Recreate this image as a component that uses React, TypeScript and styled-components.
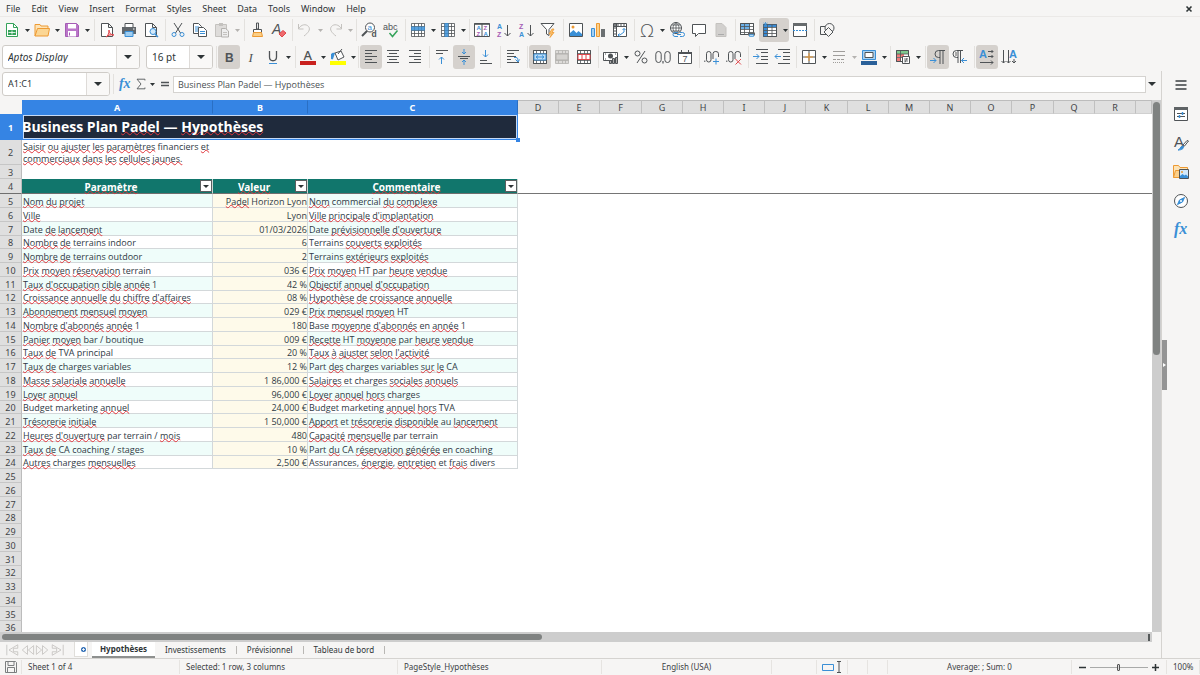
import React from "react";
import styled, { createGlobalStyle, css } from "styled-components";

const INK = "#4f5356";
const BLUE = "#3a8fd6";
const ACCENT = "#3584e4";
const LINE = "#d5d3d0";
const CHROME = "#f6f5f4";
const UI_FONT = '"Noto Sans", "Open Sans", sans-serif';
const SHEET_FONT = '"Open Sans", "Noto Sans", sans-serif';

const GlobalStyle = createGlobalStyle`
  *, *::before, *::after { box-sizing: border-box; }
  html, body { margin: 0; padding: 0; }
  body { background: ${CHROME}; color: #2e3436; font: 9px/12px ${UI_FONT}; }
  button, input { font: inherit; color: inherit; margin: 0; padding: 0; border: 0; background: none; }
`;

/* ---------- Frame ---------- */

const Frame = styled.div`
  height: 100vh;
  display: flex;
  flex-direction: column;
  overflow: hidden;
`;

const MenuBar = styled.nav`
  flex: none;
  height: 17px;
  padding: 1px 6px 0;
  display: flex;
  align-items: center;
  gap: 11px;
  border-bottom: 1px solid #ebe9e7;
`;

const MenuItem = styled.button`
  white-space: nowrap;
`;

const CloseButton = styled.button`
  margin-left: auto;
  width: 10px;
  height: 10px;
  display: grid;
  place-items: center;
`;

const ToolBar = styled.div`
  flex: none;
  height: 27px;
  padding-bottom: 1px;
  display: flex;
  align-items: center;
`;

const ToolGroup = styled.div<{ $width: number; $first?: boolean }>`
  flex: none;
  width: ${(p) => p.$width}px;
  height: 22px;
  padding-left: ${(p) => (p.$first ? 0 : 1)}px;
  display: flex;
  align-items: center;
  border-left: 1px solid ${(p) => (p.$first ? "transparent" : "#e3e1de")};
`;

const Tool = styled.button<{ $on?: boolean }>`
  flex: none;
  width: 22px;
  height: 24px;
  display: grid;
  place-items: center;
  border-radius: 3px;
  ${(p) => p.$on && css`background: #d5d1cd;`}
`;

const SplitTool = styled.span<{ $on?: boolean }>`
  flex: none;
  height: 24px;
  display: flex;
  align-items: center;
  border-radius: 3px;
  ${(p) => p.$on && css`background: #d5d1cd;`}
`;

const ArrowButton = styled.button`
  width: 8px;
  height: 22px;
  display: grid;
  place-items: center;
`;

const Svg = styled.svg`
  display: block;
  overflow: visible;
  fill: none;
  stroke: ${INK};
  stroke-width: 1;
  text {
    stroke: none;
    fill: ${INK};
    font-family: "Liberation Sans", sans-serif;
  }
`;

const Combo = styled.div<{ $width: number }>`
  flex: none;
  width: ${(p) => p.$width}px;
  height: 24px;
  display: flex;
  border: 1px solid #cfccc8;
  border-radius: 3px;
  background: #fff;
  overflow: hidden;
`;

const ComboInput = styled.input<{ $italic?: boolean; $large?: boolean }>`
  flex: 1;
  min-width: 0;
  padding-left: 5px;
  outline: none;
  color: #2e3436;
  font-size: ${(p) => (p.$large ? 10 : 9)}px;
  font-style: ${(p) => (p.$italic ? "italic" : "normal")};
`;

const ComboButton = styled.button`
  width: 23px;
  display: grid;
  place-items: center;
  border-left: 1px solid #dedbd8;
  background: #f9f8f7;
`;

const FontRow = styled.div`
  flex: none;
  display: flex;
  gap: 6px;
  padding: 0 3px 0 2px;
`;

/* ---------- Work area ---------- */

const Work = styled.div`
  flex: 1;
  min-height: 0;
  display: flex;
`;

const Main = styled.main`
  flex: 1;
  min-width: 0;
  display: flex;
  flex-direction: column;
`;

const FormulaBar = styled.div`
  flex: none;
  height: 29px;
  padding: 1px 4px 4px 2px;
  display: flex;
  align-items: center;
`;

const FormulaTools = styled.div`
  height: 20px;
  margin-left: 3px;
  padding-left: 2px;
  display: flex;
  align-items: center;
  border-left: 1px solid #e3e1de;
`;

const SmallTool = styled.button<{ $width: number }>`
  width: ${(p) => p.$width}px;
  height: 20px;
  display: grid;
  place-items: center;
`;

const FormulaInput = styled.input`
  flex: 1;
  min-width: 0;
  height: 17px;
  padding: 0 4px;
  border: 1px solid ${LINE};
  background: #fff;
  outline: none;
  color: #4a4f52;
  font-family: ${SHEET_FONT};
`;

const SheetRow = styled.div`
  flex: 1;
  min-height: 0;
  display: flex;
`;

const SheetView = styled.div`
  flex: 1;
  min-width: 0;
  overflow: hidden;
  background: #fff;
`;

const Sheet = styled.table`
  width: 100%;
  table-layout: fixed;
  border-collapse: separate;
  border-spacing: 0;
  line-height: 11px;
  th, td { padding: 0; }
`;

const Corner = styled.td`
  background: ${CHROME};
`;

const ColHead = styled.th<{ $on?: boolean }>`
  border-top: 1px solid ${(p) => (p.$on ? ACCENT : "#bcbcbc")};
  border-right: 1px solid ${(p) => (p.$on ? "#2a6fc4" : "#c0c0c0")};
  border-bottom: 1px solid ${(p) => (p.$on ? ACCENT : "#d0d0d0")};
  background: ${(p) => (p.$on ? ACCENT : "#dfdfdf")};
  color: ${(p) => (p.$on ? "#fff" : "#3f4447")};
  font-weight: ${(p) => (p.$on ? 700 : 400)};
`;

const RowHead = styled.th<{ $on?: boolean; $frozen?: boolean }>`
  && { padding-top: 1px; }
  border-right: 1px solid ${(p) => (p.$on ? ACCENT : "#bcbcbc")};
  border-bottom: 1px solid ${(p) => (p.$frozen ? "#6f6f6f" : p.$on ? ACCENT : "#c6c6c6")};
  background: ${(p) => (p.$on ? ACCENT : "#dfdfdf")};
  color: ${(p) => (p.$on ? "#fff" : "#3f4447")};
  font-weight: ${(p) => (p.$on ? 700 : 400)};
`;

const Line = styled.tr<{ $height: number }>`
  height: ${(p) => p.$height}px;
`;

const TitleCell = styled.td`
  position: relative;
  background: #1f2a3c;
  color: #fff;
  font: 700 14px/20px ${SHEET_FONT};
  box-shadow: inset 0 0 0 1px ${ACCENT}, inset 0 0 0 2px #c5daf6;
`;

const FillHandle = styled.span`
  position: absolute;
  right: -2px;
  bottom: -2px;
  width: 4px;
  height: 4px;
  background: ${ACCENT};
`;

const NoteCell = styled.td`
  && { padding: 1px 0 0 1px; }
  color: #2f3a45;
  font-family: ${SHEET_FONT};
  line-height: 12px;
  vertical-align: top;
`;

const HeadCell = styled.th`
  border-right: 1px solid #cbd5d1;
  border-bottom: 1px solid #6f6f6f;
  background: #11766c;
  color: #fff;
  font-weight: 700;
  font-size: 10px;
`;

const HeadInner = styled.div`
  display: flex;
  align-items: center;
  height: 14px;
`;

const HeadLabel = styled.span`
  flex: 1;
  padding-top: 2px;
`;

const FilterButton = styled.button`
  flex: none;
  width: 12px;
  height: 12px;
  display: grid;
  place-items: center;
  border: 1px solid #5a5f60;
  background: #fff;
`;

const FrozenCell = styled.td`
  border-bottom: 1px solid #757575;
`;

const Cell = styled.td<{ $tint: string; $right?: boolean }>`
  && { padding: 1px 0 0 ${(p) => (p.$right ? 0 : 1)}px; }
  border-right: 1px solid #d3d8da;
  border-bottom: 1px solid #d3d8da;
  background: ${(p) => p.$tint};
  color: #2f3a45;
  font-family: ${SHEET_FONT};
  white-space: nowrap;
  text-align: ${(p) => (p.$right ? "right" : "left")};
`;

const Misspelt = styled.span`
  text-decoration: underline wavy #e0353b 1px;
  text-decoration-skip-ink: none;
  text-underline-offset: -1px;
`;

/* ---------- Scroll bars, tabs, side bar, status ---------- */

const VScroll = styled.div`
  flex: none;
  width: 9px;
  padding: 2px 1px;
  background: #cdcdcd;
`;

const VThumb = styled.div`
  height: 48%;
  border-radius: 4px;
  background: #7f8281;
`;

const HScroll = styled.div`
  flex: none;
  height: 10px;
  margin-right: 9px;
  padding: 2px;
  display: flex;
  justify-content: space-between;
  align-items: center;
  background: #cdcdcd;
`;

const HThumb = styled.div`
  width: 47%;
  height: 6px;
  border-radius: 4px;
  background: #7f8281;
`;

const SplitGrip = styled.div`
  width: 2px;
  height: 7px;
  background: #55595a;
`;

const TabBar = styled.div`
  flex: none;
  height: 16px;
  padding-left: 5px;
  display: flex;
  font-size: 8px;
`;

const TabNav = styled.button`
  width: 15px;
  display: grid;
  place-items: center;
`;

const AddSheet = styled.button`
  width: 14px;
  height: 15px;
  margin: 0 4px 0 9px;
  display: grid;
  place-items: center end;
  border: 1px solid #e0deda;
  border-top: 0;
  background: #fff;
`;

const Tab = styled.button<{ $on?: boolean }>`
  height: 16px;
  padding: 0 8px;
  white-space: nowrap;
  ${(p) =>
    p.$on
      ? css`
          margin-right: 2px;
          background: #fff;
          border-bottom: 2px solid #8e908f;
          font-weight: 700;
        `
      : css`
          display: flex;
          align-items: center;
          padding-right: 0;
          &::after {
            content: "";
            width: 1px;
            height: 8px;
            margin: 0 2px 0 10px;
            background: #b9b7b4;
          }
        `}
`;

const SideBar = styled.aside`
  flex: none;
  width: 39px;
  display: flex;
  border-left: 1px solid ${LINE};
`;

const DeckHandle = styled.button`
  align-self: center;
  width: 5px;
  height: 50px;
  display: grid;
  place-items: center;
  background: #949494;
`;

const Deck = styled.div`
  flex: 1;
  padding: 4px 5px 0 0;
  display: flex;
  flex-direction: column;
  align-items: center;
  gap: 9px;
`;

const DeckButton = styled.button`
  width: 20px;
  height: 20px;
  display: grid;
  place-items: center;
`;

const StatusBar = styled.footer`
  flex: none;
  height: 17px;
  display: flex;
  border-top: 1px solid ${LINE};
  font-size: 8px;
`;

const StatusCell = styled.div<{ $width: number; $grow?: boolean; $center?: boolean }>`
  flex: ${(p) => (p.$grow ? 1 : 0)} 0 ${(p) => p.$width}px;
  min-width: 0;
  margin: 1px 0;
  padding: 0 6px;
  display: flex;
  align-items: center;
  gap: 3px;
  justify-content: ${(p) => (p.$center ? "center" : "flex-start")};
  border-right: 1px solid #e6e4e1;
  white-space: nowrap;
  color: #3c4144;
`;

const ZoomButton = styled.button`
  width: 9px;
  height: 14px;
  flex: none;
  display: grid;
  place-items: center;
`;

const ZoomSlider = styled.input`
  appearance: none;
  flex: 1;
  min-width: 0;
  height: 12px;
  background: linear-gradient(#a9aaa9, #a9aaa9) center / 100% 1px no-repeat;
  &::-webkit-slider-thumb {
    appearance: none;
    width: 3px;
    height: 7px;
    border: 1px solid #555;
    border-radius: 1px;
    background: #ddd;
  }
`;

/* ---------- Icons ---------- */

const C = { ink: INK, blue: BLUE, purple: "#a45cb4", green: "#35a35a", orange: "#ed9a33", red: "#e0474c", pale: "#c4c2bf" };

const lines = (ys: number[][], stroke = C.ink) => ys.map(([y, a, b], i) => <path key={i} d={`M${a} ${y}.5H${b}`} stroke={stroke} />);
const grid = (stroke = C.ink) => <path d="M1.5 1.5h13v13h-13zM1.5 4.5h13M1.5 8.5h13M1.5 11.5h13M4.5 1.5v13M8.5 1.5v13M11.5 1.5v13" stroke={stroke} strokeWidth=".8" />;
const page = <path d="M2.5 1.5h7l4 4v9h-11zM9.5 1.5v4h4" fill="#fff" />;
const tint = (fill: string) => ({ fill });

const icons: Record<string, React.ReactNode> = {
  new: (<><path d="M2.5 1.5h7l4 4v9h-11z" fill="#fff" stroke={C.green} /><path d="M9.5 1.5v4h4" stroke={C.green} /><path d="M4 8h8v5H4z" fill={C.green} stroke="none" /><path d="M4.5 10.500h7M8 8.500v4" stroke="#fff" strokeWidth=".8" /></>),
  open: (<><path d="M1 14V2.500h5l1 1.500h7v3" fill="#fde3b5" stroke={C.orange} /><path d="M1 14l2.500-7.500h12L14 14z" fill="#fbd694" stroke={C.orange} /></>),
  save: (<><path d="M1.500 1.500h11l2 2v11h-13z" fill="#bb76c9" stroke={C.purple} /><path d="M4 2h8v4.500H4z" fill="#fff" stroke="none" /><path d="M4 9h8v5.500H4z" fill="#fff" stroke="none" /><path d="M5.500 10.500v3" stroke={C.purple} /></>),
  pdf: (<>{page}<path d="M7 15c2-1 3-4 3-7 0 3 2 5 5 5-3-.5-6 0-8 2z" stroke={C.red} fill="#f6bcbc" /></>),
  print: (<><path d="M4 5V1.500h8V5" fill="#fff" /><path d="M1 5h14v7H1z" fill="#61666a" stroke="none" /><path d="M4 9.500h8v5H4z" fill="#9fcdf0" stroke={C.blue} /><path d="M12 7h1.500" stroke="#fff" /></>),
  preview: (<>{page}<circle cx="10" cy="9.500" r="3" fill="#d3e9fa" stroke={C.blue} /><path d="M12 12l3 3" stroke={C.blue} strokeWidth="1.500" /></>),
  cut: (<><path d="M4 1l6.500 10M12 1L5.500 11" /><circle cx="4" cy="12.500" r="2" stroke={C.blue} /><circle cx="12" cy="12.500" r="2" stroke={C.blue} /></>),
  copy: (<><path d="M1.500 1.500h5l3 3v7h-8z" fill="#fff" /><path d="M3 5h4M3 7h4M3 9h3" stroke={C.blue} /><path d="M6.500 5.500h5l3 3v6h-8z" fill="#fff" /><path d="M8 9.500h5M8 11.500h5" stroke={C.blue} /></>),
  paste: (<><path d="M1.500 2.500h11v12h-11z" fill="#dedcda" stroke={C.pale} /><path d="M5 1h4v3H5z" fill={C.pale} stroke="none" /><path d="M7.500 6.500h4l3 2.500v6h-7z" fill="#eee" stroke="#b3b1ae" /><path d="M9 10.500h4M9 12.500h4" stroke={C.pale} /></>),
  brush: (<><path d="M7.500 1h2v6h-2z" fill="#e8e8e8" /><path d="M4.500 7.500h8v3h-8z" fill="#fff" /><path d="M4.500 10.500l-1 4h10l-1-4z" fill="#fbcf87" stroke={C.orange} /></>),
  clear: (<><text x="1" y="11.500" fontSize="14" fontStyle="italic">A</text><path d="M8 12l4-3.500 3 2.500-4 4z" fill="#ef6a6d" stroke={C.red} /></>),
  undo: (<path d="M1.500 2v5h5M1.800 6.500C4 2.500 9 1.500 11.500 4.500S11 11 7 14" stroke={C.pale} />),
  redo: (<path d="M14.500 2v5h-5M14.200 6.500C12 2.500 7 1.500 4.500 4.500S5 11 9 14" stroke={C.pale} />),
  find: (<><circle cx="9" cy="5.500" r="4.500" fill="#fff" /><path d="M6 9L1 14" strokeWidth="2" /><text x="6.500" y="8" fontSize="8" style={tint(C.blue)}>a</text><text x="10.500" y="15" fontSize="8.500" fontWeight="700">d</text></>),
  spell: (<><text x="0" y="7.500" fontSize="9">abc</text><path d="M6.500 11l3 3.500 5-6" stroke={C.green} strokeWidth="1.500" /></>),
  row: (<><path d="M1.500 1.500h13v13h-13z" fill="#fff" stroke="none" />{grid()}<path d="M1 4.500h14v4H1z" fill={C.blue} stroke="none" opacity=".85" /></>),
  col: (<><path d="M1.500 1.500h13v13h-13z" fill="#fff" stroke="none" />{grid()}<path d="M4.500 1h4v14h-4z" fill={C.blue} stroke="none" opacity=".85" /></>),
  sort: (<><path d="M.5 1.500h15v13H.5zM8 2v12" fill="#fff" /><path d="M.5 1h15v1.800H.5z" fill={C.ink} stroke="none" /><g fontSize="6" fontWeight="700"><text x="2.500" y="8" style={tint(C.blue)}>A</text><text x="9.500" y="8" style={tint(C.purple)}>Z</text><text x="2.500" y="14" style={tint(C.purple)}>Z</text><text x="9.500" y="14" style={tint(C.blue)}>A</text></g></>),
  asc: (<><g fontSize="7" fontWeight="700"><text x="1" y="6.500" style={tint(C.blue)}>A</text><text x="1" y="14.500" style={tint(C.purple)}>Z</text></g><path d="M11.500 3v11M8.500 11l3 3 3-3" /></>),
  desc: (<><g fontSize="7" fontWeight="700"><text x="1" y="6.500" style={tint(C.purple)}>Z</text><text x="1" y="14.500" style={tint(C.blue)}>A</text></g><path d="M12.500 3v11M9.500 11l3 3 3-3" /></>),
  filter: (<><path d="M1 1.500h13l-5 6v6l-2.500-1.500V7.500z" fill="#fff" /><path d="M12 7l-3 5h2.500L10 15.500 14 10.500h-2L14 7z" fill="#fac06c" stroke={C.orange} strokeWidth=".8" /></>),
  image: (<><path d="M1.500 1.500h13v13h-13z" fill="#fff" /><path d="M2 14v-3l3.500-3 3 3 2-2 3.500 3v2z" fill={C.blue} stroke="none" /><circle cx="5" cy="5" r="1.500" fill={C.orange} stroke="none" /></>),
  chart: (<><path d="M1.500 6.500h3v8h-3z" fill="#a5d0f2" stroke={C.blue} /><path d="M6.500 1.500h3v13h-3z" fill="#fbd08b" stroke={C.orange} /><path d="M11 7h4v8h-4z" fill="#6b6f71" stroke="none" /></>),
  pivot: (<><path d="M1.500 1.500h13v13h-13zM1.500 4.500h13M4.500 1.500v13" fill="#fff" /><path d="M2 3h12M3 2v12" strokeDasharray="2 1" /><path d="M12 6.500v3.500l-4 3H6M10.500 8L12 6.500 13.500 8M7.500 11.500L6 13l1.500 1.500" stroke={C.blue} /></>),
  omega: <text x="1" y="14.500" fontSize="18" style={{ fontFamily: SHEET_FONT, fontWeight: 300 }}>Ω</text>,
  link: (<><circle cx="7" cy="6" r="5.500" fill="#fff" /><path d="M1.500 6h11M7 .5v11M2.500 3h9M2.500 9h9M7 .5c-4 3-4 8 0 11M7 .5c4 3 4 8 0 11" strokeWidth=".8" /><path d="M9 10.500H6a2 2 0 0 0 0 4h3M11 10.500h2.500a2 2 0 0 1 0 4H11M8 12.500h4" stroke={C.blue} /></>),
  comment: (<path d="M1.500 2.500h13v9h-7l-3 3v-3h-3z" fill="#fff" />),
  header: (<><path d="M3 1.500h6l4 4v9H3z" fill="#d2d0ce" stroke={C.pale} /><path d="M5 12.500h6" stroke="#aaa" /></>),
  printarea: (<><path d="M.5 1.500h13v11H.5z" fill="#fff" /><path d="M1 2h9v5H1z" fill="#6db1e8" stroke="none" /><path d="M.5 1.500h13v11H.5zM.5 4.500h13M.5 7.500h13M.5 10.500h13M4.500 1.500v11M9.500 1.500v11" strokeWidth=".8" /><path d="M8 10.500h7v3H8z" fill="#5f6467" stroke="none" /><path d="M9.500 12.500h4v2h-4z" fill="#b4d9f5" stroke={C.blue} strokeWidth=".7" /></>),
  freeze: (<><path d="M1.500 2.500h13v12h-13z" fill="#fff" /><path d="M1 2h14v3H1zM1 2h4.500v13H1z" fill="#398bd6" stroke="none" /><path d="M1.500 5.500h13M1.500 8.500h13M1.500 11.500h13M5.500 2.500v12M10 2.500v12M1.500 2.500h13v12h-13z" strokeWidth=".8" /><path d="M3.500 0v4M1.500 1l4 3M5.500 1l-4 3" stroke={BLUE} strokeWidth=".8" /></>),
  split: (<><path d="M1.500 1.500h13v13h-13z" fill="#fff" /><path d="M1 1h14v3H1z" fill="#666a6c" stroke="none" /><path d="M1 8.500h14" stroke={C.blue} strokeDasharray="2 1" /></>),
  shapes: (<><path d="M1.500 4.500h8v8h-8z" /><circle cx="10.500" cy="6" r="4.500" fill={CHROME} /><path d="M9.500 5.500l4.500 4.500-4.500 4.500L5 10z" fill={CHROME} /></>),
  bold: <text x="4" y="12.500" fontSize="12" fontWeight="700">B</text>,
  italic: <text x="5.500" y="12.500" fontSize="13" fontStyle="italic" style={{ fontFamily: '"Liberation Serif", serif' }}>I</text>,
  underline: (<><path d="M4.500 2v6c0 5 7 5 7 0V2" strokeWidth="1.300" /><path d="M4 14.500h8" stroke={C.blue} /></>),
  fontcolor: (<><text x="3.500" y="10.500" fontSize="13" style={{ fontFamily: UI_FONT, fontWeight: 500 }}>A</text><path d="M0 12h16v4H0z" fill="#c9211e" stroke="none" /></>),
  fill: (<><path d="M5 4l6-2 3 6-6 3zM5 4c-3 1-4 3-3 6M8 5l4-5" fill="#fff" /><path d="M1 5c2-2 3-1 4-1l-2 6c-1 1-2 0-2-1z" fill={C.blue} stroke="none" /><path d="M0 12h16v4H0z" fill="#ff0" stroke="none" /></>),
  left: lines([[1, 2, 14], [4, 2, 9], [7, 2, 14], [10, 2, 9], [13, 2, 14]]),
  center: lines([[1, 2, 14], [4, 4, 12], [7, 2, 14], [10, 4, 12], [13, 2, 14]]),
  right: lines([[1, 2, 14], [4, 7, 14], [7, 2, 14], [10, 7, 14], [13, 2, 14]]),
  top: (<>{lines([[1, 2, 14], [4, 2, 9]])}<path d="M7.500 15V8M5 10.500L7.500 8l2.500 2.500" stroke={C.blue} /></>),
  middle: (<>{lines([[7, 2, 14], [9, 4, 12]])}<path d="M8 0v5M6 3l2 2 2-2M8 16v-5M6 13l2-2 2 2" stroke={C.blue} /></>),
  bottom: (<>{lines([[11, 2, 9], [14, 2, 14]])}<path d="M7.500 1v7M5 5.500L7.500 8 10 5.500" stroke={C.blue} /></>),
  wrap: (<>{lines([[1, 2, 14], [4, 2, 9], [7, 2, 11], [13, 2, 14]])}<path d="M2 10.500h4" /><path d="M9 8.500h2c2 0 2 2 2 4M10.500 10.500l2.500 2.500 1.500-2.500" stroke={C.blue} /></>),
  merge: (<><path d="M1.500 1.500h13v13h-13z" fill="#fff" />{grid()}<path d="M2 5h12v6H2z" fill="#bcdcf5" stroke={C.blue} /><path d="M4 8h8M6 6.500L4 8l2 1.500M10 6.500L12 8l-2 1.500" stroke={C.blue} /></>),
  unmerge: (<><path d="M1.500 1.500h13v13h-13z" fill="#dddbd9" stroke="none" />{grid("#b3b1ae")}<path d="M2 5h12v6H2z" fill="#d5d3d0" stroke="#b3b1ae" /></>),
  splitcells: (<><path d="M1.500 1.500h13v13h-13z" fill="#fff" />{grid()}<path d="M2 5.500h12v5H2zM6 5.500v5M10 5.500v5" fill="#fff" stroke={C.red} /></>),
  currency: (<><path d="M.5 3.500h14v8H.5z" fill="#fff" /><circle cx="7.500" cy="7" r="2.500" fill={INK} stroke="none" /><path d="M2 5h1M12 5h1M2 10h1" /><path d="M6.500 11.500h2v3h-2zM9.500 9.500h2v5h-2zM12.500 8.500h2v6h-2z" fill="#aaa" /></>),
  percent: (<><circle cx="4.500" cy="4.500" r="2.500" /><circle cx="11.500" cy="11.500" r="2.500" /><path d="M12 2L4 14" /></>),
  number: (<><rect x=".8" y="2.500" width="5.400" height="11" rx="2.700" /><rect x="9.800" y="2.500" width="5.400" height="11" rx="2.700" /><path d="M8 12v2.500" strokeWidth="1.200" /></>),
  date: (<><path d="M1.500 3.500h13v11h-13z" fill="#fff" /><path d="M1 3h14v2H1z" fill={INK} stroke="none" /><path d="M4.500 1v3M11.500 1v3" /><text x="5.500" y="13" fontSize="9">7</text></>),
  adddec: (<><path d="M.8 11.500V13" /><rect x="2.500" y="2.500" width="4.500" height="10.500" rx="2.200" /><path d="M9 10V4.700a2.700 2.200 0 0 1 5.500 0V8" /><path d="M12 9.500v6M9 12.500h6" stroke={C.blue} /></>),
  remdec: (<><path d="M.8 11.500V13" /><rect x="2.500" y="2.500" width="4.500" height="10.500" rx="2.200" /><path d="M9 10V4.700a2.700 2.200 0 0 1 5.500 0V8" /><path d="M9.500 10l5.500 5.500M15 10l-5.500 5.500" stroke={C.red} /></>),
  indent: (<>{lines([[0, 3, 15], [3, 8, 15], [7, 8, 15], [10, 8, 15], [14, 3, 15]])}<path d="M0 7.500h6M3.500 5L6 7.500 3.500 10" stroke={C.blue} /></>),
  outdent: (<>{lines([[0, 3, 15], [3, 8, 15], [7, 8, 15], [10, 8, 15], [14, 3, 15]])}<path d="M0 7.500h6M2.500 5L0 7.500 2.500 10" stroke={C.blue} /></>),
  borders: (<><path d="M1.500 1.500h13v13h-13z" fill="#fff" /><path d="M8 1.500v13M1.500 8h13" /><path d="M8 4v8M4 8h8" stroke={C.orange} /></>),
  linestyle: (<><path d="M2 2.500h12M2 6.500h12" stroke="#9f9d9a" /><path d="M2 10.500h12" strokeDasharray="3 1" stroke="#9f9d9a" /><path d="M2 13.500h12" strokeDasharray="1 1" stroke="#9f9d9a" /></>),
  bordercolor: (<><path d="M1.500 1.500h13v9h-13z" fill="#a9d1f1" stroke={C.blue} /><path d="M4 3.500h8v5H4z" fill="#fff" /><path d="M0 12h16v4H0z" fill="#2a6099" stroke="none" /></>),
  condition: (<><path d="M1.500 1.500h12v11h-12z" fill="#fff" /><path d="M2 2h11v3H2z" fill="#7fc98f" stroke="none" /><path d="M2 5h7v3H2zM2 9h4v3H2z" fill="#ef7b7b" stroke="none" /><path d="M1.500 1.500h12v11h-12zM1.500 5h12M1.500 8.500h12M5.500 1.500v11" strokeWidth=".8" /><path d="M7.500 7.500h7v7h-7z" fill="#fff" /><path d="M9 10h4M9 12h4M12 9l-2 4.500" strokeWidth=".8" /></>),
  ltr: (<><path d="M15 1.500H8.500a3.500 3.500 0 0 0 0 7H10M10 1.500V15M13 1.500V15" /><path d="M0 11.500h6M3.500 9L6 11.500 3.500 14" stroke={C.blue} /></>),
  rtl: (<><path d="M11 1.500H4.500a3.500 3.500 0 0 0 0 7H6M6 1.500V14M8.500 1.500V14" /><path d="M3 3h3v4H3z" fill="#aaa" stroke="none" /><path d="M15 11.500H9.500M12 9l-2.500 2.500L12 14" stroke={C.blue} /></>),
  hdir: (<><text x="0" y="9" fontSize="11" fontWeight="700" style={tint(C.blue)}>A</text><path d="M9 2.500h5M12.500 1L14 2.500 12.500 4M9 7.500h5M12.500 6L14 7.500 12.500 9M1 13.500h13M12 11.500l2 2-2 2" /></>),
  vdir: (<><text x="8" y="9" fontSize="11" fontWeight="700" style={tint(C.blue)}>A</text><path d="M2.500 1v13M.5 12l2 2 2-2M7.500 1v13M5.500 12l2 2 2-2M13 10v4M11 12l2 2 2-2" /></>),
  fx: (<text x="1" y="12" fontSize="16" fontStyle="italic" fontWeight="700" style={{ fill: C.blue, fontFamily: '"Liberation Serif", serif' }}>fx</text>),
  sum: <path d="M12.500 4V2.500h-9L8 8l-4.500 5.500h9V12" />,
  equals: <path d="M4 6.500h8M4 9.500h8" strokeWidth="1.600" />,
  menu: <path d="M2.500 4h11M2.500 8h11M2.500 12h11" stroke="#3b3f41" strokeWidth="1.500" />,
  props: (<><path d="M1.500 1.500h13v13h-13z" fill="#fff" /><path d="M1 1h14v3H1z" fill="#5f6365" stroke="none" /><path d="M4 7.500h8M4 10.500h8" /><path d="M9.500 6v3M6.500 9v3" stroke={C.blue} strokeWidth="1.500" /></>),
  styles: (<><text x="1" y="12" fontSize="15">A</text><path d="M15.500 6l-4 5-1.500-1 4-4.500z" fill="#fff" /><path d="M5 15c2 0 2-3.500 4.500-4 2 1 1 4-4.500 4z" fill={C.blue} stroke={C.blue} /></>),
  gallery: (<><path d="M.5 13.500v-12h5L7 3.500h7.500V6" fill="#fde3b5" stroke={C.orange} /><path d="M.5 13.500l2-7h4v7z" fill="#fbd08b" stroke={C.orange} /><path d="M6.500 5.500h9v9h-9z" fill="#d3e9fa" /><path d="M7 14v-2l2.500-2 2 1.500 1.500-1 2 2V14z" fill={C.blue} stroke="none" /><circle cx="9" cy="8" r="1" fill={C.orange} stroke="none" /></>),
  compass: (<><circle cx="8" cy="8" r="6.500" fill="#fff" /><path d="M11.500 4.500L9.500 9 4.500 11.500 6.500 7z" fill={C.blue} stroke={C.blue} /><circle cx="8" cy="8" r="1" fill="#fff" stroke="none" /></>),
  disk: (<><path d="M2.500 2.500h10l1 1v10h-11z" stroke="#7c7f80" /><path d="M5 3v3.500h6V3M4.500 13.500v-5h7v5" stroke="#7c7f80" /></>),
};

const Icon = ({ name, size = 16 }: { name: string; size?: number }) => (
  <Svg width={size} height={size} viewBox="0 0 16 16" aria-hidden="true">{icons[name]}</Svg>
);

const Triangle = ({ color = "#2e3436", width = 5 }: { color?: string; width?: number }) => (
  <Svg width={width} height={Math.ceil(width / 2)} viewBox="0 0 8 4" preserveAspectRatio="none">
    <path d="M0 0h8L4 4z" fill={color} stroke="none" />
  </Svg>
);

/* ---------- Data ---------- */

type ToolSpec = { icon: string; label: string; arrow?: boolean; dim?: boolean; on?: boolean };
type Group = { width: number; tools: ToolSpec[] };

const t = (icon: string, label: string, flags = ""): ToolSpec => ({
  icon,
  label,
  arrow: flags.includes("v"),
  dim: flags.includes("d"),
  on: flags.includes("o"),
});

const standard: Group[] = [
  { width: 94, tools: [t("new", "New", "v"), t("open", "Open", "v"), t("save", "Save", "v")] },
  { width: 71, tools: [t("pdf", "Export as PDF"), t("print", "Print"), t("preview", "Print preview")] },
  { width: 79, tools: [t("cut", "Cut"), t("copy", "Copy"), t("paste", "Paste", "vd")] },
  { width: 48, tools: [t("brush", "Clone formatting"), t("clear", "Clear formatting")] },
  { width: 64, tools: [t("undo", "Undo", "vd"), t("redo", "Redo", "vd")] },
  { width: 49, tools: [t("find", "Find and replace"), t("spell", "Spelling")] },
  { width: 64, tools: [t("row", "Row", "v"), t("col", "Column", "v")] },
  { width: 94, tools: [t("sort", "Sort"), t("asc", "Sort ascending"), t("desc", "Sort descending"), t("filter", "AutoFilter")] },
  { width: 71, tools: [t("image", "Insert image"), t("chart", "Insert chart"), t("pivot", "Pivot table")] },
  { width: 101, tools: [t("omega", "Special character", "v"), t("link", "Hyperlink"), t("comment", "Comment"), t("header", "Headers and footers")] },
  { width: 79, tools: [t("printarea", "Print area"), t("freeze", "Freeze rows and columns", "vo"), t("split", "Split window")] },
  { width: 27, tools: [t("shapes", "Draw functions")] },
];

const formatting: Group[] = [
  { width: 79, tools: [t("bold", "Bold", "o"), t("italic", "Italic"), t("underline", "Underline", "v")] },
  { width: 63, tools: [t("fontcolor", "Font colour", "v"), t("fill", "Background colour", "v")] },
  { width: 71, tools: [t("left", "Align left", "o"), t("center", "Centre"), t("right", "Align right")] },
  { width: 71, tools: [t("top", "Align top"), t("middle", "Centre vertically", "o"), t("bottom", "Align bottom")] },
  { width: 27, tools: [t("wrap", "Wrap text")] },
  { width: 71, tools: [t("merge", "Merge and centre", "o"), t("unmerge", "Merge cells"), t("splitcells", "Split cells")] },
  { width: 101, tools: [t("currency", "Currency", "v"), t("percent", "Percent"), t("number", "Number"), t("date", "Date")] },
  { width: 49, tools: [t("adddec", "Add decimal"), t("remdec", "Delete decimal")] },
  { width: 48, tools: [t("indent", "Increase indent"), t("outdent", "Decrease indent")] },
  { width: 94, tools: [t("borders", "Borders", "v"), t("linestyle", "Border style", "vd"), t("bordercolor", "Border colour", "v")] },
  { width: 35, tools: [t("condition", "Conditional formatting", "v")] },
  { width: 49, tools: [t("ltr", "Left to right", "o"), t("rtl", "Right to left")] },
  { width: 49, tools: [t("hdir", "Horizontal text", "o"), t("vdir", "Vertical text")] },
];

/* Words in square brackets carry the spell checker's underline. */
const records: [string, string, string][] = [
  ["[Nom] [du] [projet]", "[Padel] Horizon Lyon", "[Nom] commercial [du] [complexe]"],
  ["[Ville]", "Lyon", "[Ville] [principale] [d'implantation]"],
  ["Date [de] [lancement]", "01/03/2026", "Date [prévisionnelle] [d'ouverture]"],
  ["[Nombre] [de] terrains indoor", "6", "Terrains [couverts] [exploités]"],
  ["[Nombre] [de] terrains outdoor", "2", "Terrains [extérieurs] [exploités]"],
  ["[Prix] [moyen] [réservation] terrain", "036 €", "[Prix] [moyen] HT par [heure] [vendue]"],
  ["[Taux] [d'occupation] [cible] [année] 1", "42 %", "[Objectif] [annuel] [d'occupation]"],
  ["[Croissance] [annuelle] [du] [chiffre] [d'affaires]", "08 %", "[Hypothèse] [de] [croissance] [annuelle]"],
  ["[Abonnement] [mensuel] [moyen]", "029 €", "[Prix] [mensuel] [moyen] HT"],
  ["[Nombre] [d'abonnés] [année] 1", "180", "Base [moyenne] [d'abonnés] en [année] 1"],
  ["[Panier] [moyen] bar / boutique", "009 €", "[Recette] HT [moyenne] par [heure] [vendue]"],
  ["[Taux] [de] TVA principal", "20 %", "[Taux] [à] [ajuster] [selon] [l'activité]"],
  ["[Taux] [de] charges variables", "12 %", "Part [des] charges variables [sur] [le] CA"],
  ["[Masse] [salariale] [annuelle]", "1 86,000 €", "[Salaires] et charges [sociales] [annuels]"],
  ["[Loyer] [annuel]", "96,000 €", "[Loyer] [annuel] [hors] charges"],
  ["Budget marketing [annuel]", "24,000 €", "Budget marketing [annuel] [hors] TVA"],
  ["[Trésorerie] [initiale]", "1 50,000 €", "[Apport] et [trésorerie] [disponible] au [lancement]"],
  ["[Heures] [d'ouverture] par terrain / [mois]", "480", "[Capacité] [mensuelle] par terrain"],
  ["[Taux] [de] CA coaching / stages", "10 %", "Part [du] CA [réservation] [générée] en coaching"],
  ["[Autres] charges [mensuelles]", "2,500 €", "Assurances, [énergie], [entretien] et [frais] divers"],
];

const letters = "ABCDEFGHIJKLMNOPQR".split("");
const emptyRows = Array.from({ length: 12 }, (_, i) => i + 25);
const menus = ["File", "Edit", "View", "Insert", "Format", "Styles", "Sheet", "Data", "Tools", "Window", "Help"];
const sheets = ["Hypothèses", "Investissements", "Prévisionnel", "Tableau de bord"];

const colWidth = (i: number) => [191, 95, 210][i] ?? (i % 5 === 0 ? 42 : 41);
const rowHeight = (n: number) => (n % 4 === 0 ? 13 : 14);

const Spelled = ({ text }: { text: string }) => (
  <>
    {text.split(/(\[[^\]]+\])/).map((part, i) =>
      part.startsWith("[") ? <Misspelt key={i}>{part.slice(1, -1)}</Misspelt> : part
    )}
  </>
);

const ToolButtons = ({ groups, flush }: { groups: Group[]; flush?: boolean }) => (
  <>
    {groups.map((g, i) => (
      <ToolGroup key={i} $width={g.width} $first={flush && i === 0}>
        {g.tools.map((tool) =>
          tool.arrow ? (
            <SplitTool key={tool.icon} $on={tool.on}>
              <Tool aria-label={tool.label} disabled={tool.dim}><Icon name={tool.icon} /></Tool>
              <ArrowButton aria-label={`${tool.label} options`} disabled={tool.dim}>
                <Triangle color={tool.dim ? "#b5b3b0" : undefined} />
              </ArrowButton>
            </SplitTool>
          ) : (
            <Tool key={tool.icon} $on={tool.on} aria-label={tool.label}><Icon name={tool.icon} /></Tool>
          )
        )}
      </ToolGroup>
    ))}
  </>
);

const FilterHead = ({ label }: { label: string }) => (
  <HeadCell scope="col">
    <HeadInner>
      <HeadLabel><Spelled text={label} /></HeadLabel>
      <FilterButton aria-label="Filter"><Triangle width={6} /></FilterButton>
    </HeadInner>
  </HeadCell>
);

export default function App() {
  return (
    <Frame>
      <GlobalStyle />
      <MenuBar>
        {menus.map((m) => <MenuItem key={m}>{m}</MenuItem>)}
        <CloseButton aria-label="Close document">
          <Svg width="6" height="6" viewBox="0 0 6 6"><path d="M.5.5l5 5M5.500.5l-5 5" stroke="#2e3436" strokeWidth="1.600" /></Svg>
        </CloseButton>
      </MenuBar>

      <ToolBar><ToolButtons groups={standard} flush /></ToolBar>

      <ToolBar>
        <FontRow>
          <Combo $width={138}>
            <ComboInput $italic $large aria-label="Font name" defaultValue="Aptos Display" />
            <ComboButton aria-label="Choose font"><Triangle width={8} /></ComboButton>
          </Combo>
          <Combo $width={67}>
            <ComboInput $large aria-label="Font size" defaultValue="16 pt" />
            <ComboButton aria-label="Choose size"><Triangle width={8} /></ComboButton>
          </Combo>
        </FontRow>
        <ToolButtons groups={formatting} />
      </ToolBar>

      <Work>
        <Main>
          <FormulaBar>
            <Combo $width={108}>
              <ComboInput aria-label="Name box" defaultValue="A1:C1" />
              <ComboButton aria-label="Choose range"><Triangle width={8} /></ComboButton>
            </Combo>
            <FormulaTools>
              <SmallTool $width={18} aria-label="Function wizard"><Icon name="fx" size={14} /></SmallTool>
              <SmallTool $width={14} aria-label="Sum"><Icon name="sum" size={14} /></SmallTool>
              <SmallTool $width={9} aria-label="Choose function"><Triangle /></SmallTool>
              <SmallTool $width={16} aria-label="Formula"><Icon name="equals" /></SmallTool>
            </FormulaTools>
            <FormulaInput aria-label="Input line" defaultValue="Business Plan Padel — Hypothèses" />
            <SmallTool $width={11} aria-label="Expand formula bar"><Triangle width={8} /></SmallTool>
          </FormulaBar>

          <SheetRow>
            <SheetView>
              <Sheet>
                <colgroup>
                  <col width={22} />
                  {letters.map((l, i) => <col key={l} width={colWidth(i)} />)}
                  <col />
                </colgroup>
                <thead>
                  <Line $height={14}>
                    <Corner />
                    {letters.map((l, i) => <ColHead key={l} scope="col" $on={i < 3}>{l}</ColHead>)}
                    <ColHead scope="col" aria-label="S" />
                  </Line>
                </thead>
                <tbody>
                  <Line $height={26}>
                    <RowHead scope="row" $on>1</RowHead>
                    <TitleCell colSpan={3}>
                      <Spelled text="Business Plan [Padel] — [Hypothèses]" />
                      <FillHandle />
                    </TitleCell>
                  </Line>
                  <Line $height={25}>
                    <RowHead scope="row">2</RowHead>
                    <NoteCell>
                      <Spelled text="[Saisir] [ou] [ajuster] [les] [paramètres] financiers [et] [commerciaux] [dans] [les] [cellules] [jaunes.]" />
                    </NoteCell>
                  </Line>
                  <Line $height={14}><RowHead scope="row">3</RowHead></Line>
                  <Line $height={15}>
                    <RowHead scope="row" $frozen>4</RowHead>
                    <FilterHead label="[Paramètre]" />
                    <FilterHead label="[Valeur]" />
                    <FilterHead label="[Commentaire]" />
                    <FrozenCell colSpan={16} />
                  </Line>
                  {records.map(([name, value, note], i) => (
                    <Line key={name} $height={rowHeight(i + 5)}>
                      <RowHead scope="row">{i + 5}</RowHead>
                      <Cell $tint={i % 2 ? "#ffffff" : "#effdfa"}><Spelled text={name} /></Cell>
                      <Cell $tint="#fefaea" $right><Spelled text={value} /></Cell>
                      <Cell $tint={i % 2 ? "#ffffff" : "#effdfa"}><Spelled text={note} /></Cell>
                    </Line>
                  ))}
                  {emptyRows.map((n) => (
                    <Line key={n} $height={rowHeight(n)}><RowHead scope="row">{n}</RowHead></Line>
                  ))}
                </tbody>
              </Sheet>
            </SheetView>
            <VScroll><VThumb /></VScroll>
          </SheetRow>

          <HScroll><HThumb /><SplitGrip /></HScroll>

          <TabBar>
            {["M1.500 2v12M14 2L4 8l10 6v-4h-5V6h5z", "M8 3L2 8l6 5zM15 3L9 8l6 5z", "M1 3l6 5-6 5zM8 3l6 5-6 5z", "M14.500 2v12M2 2l10 6-10 6v-4h5V6H2z"].map((d, i) => (
              <TabNav key={i} aria-label={["First sheet", "Previous sheet", "Next sheet", "Last sheet"][i]}>
                <Svg width="15" height="14" viewBox="0 0 16 16"><path d={d} stroke="#c6c4c1" /></Svg>
              </TabNav>
            ))}
            <AddSheet aria-label="Add sheet">
              <Svg width="7" height="7" viewBox="0 0 7 7"><circle cx="3.500" cy="3.500" r="2.500" fill="#2f6db5" stroke="none" /><path d="M3.500 2v3M2 3.500h3" stroke="#fff" strokeWidth=".8" /></Svg>
            </AddSheet>
            {sheets.map((s, i) => <Tab key={s} $on={i === 0}>{s}</Tab>)}
          </TabBar>
        </Main>

        <SideBar>
          <DeckHandle aria-label="Toggle sidebar">
            <Svg width="3" height="4" viewBox="0 0 3 4"><path d="M0 0l3 2-3 2z" fill="#fff" stroke="none" /></Svg>
          </DeckHandle>
          <Deck>
            {[["menu", "Sidebar settings"], ["props", "Properties"], ["styles", "Styles"], ["gallery", "Gallery"], ["compass", "Navigator"], ["fx", "Functions"]].map(([icon, label]) => (
              <DeckButton key={icon} aria-label={label}><Icon name={icon} /></DeckButton>
            ))}
          </Deck>
        </SideBar>
      </Work>

      <StatusBar>
        <StatusCell $width={22} $center><Icon name="disk" size={16} /></StatusCell>
        <StatusCell $width={158}>Sheet 1 of 4</StatusCell>
        <StatusCell $width={218}>Selected: 1 row, 3 columns</StatusCell>
        <StatusCell $width={204} $grow>PageStyle_Hypothèses</StatusCell>
        <StatusCell $width={170} $center>English (USA)</StatusCell>
        <StatusCell $width={45} />
        <StatusCell $width={31} $center>
          <Svg width="20" height="12" viewBox="0 0 20 12"><path d="M.5 3.500h11v6H.5z" stroke={BLUE} /><path d="M15 .5h4M17 .5v11M15 11.500h4" /></Svg>
        </StatusCell>
        <StatusCell $width={20} />
        <StatusCell $width={20} />
        <StatusCell $width={184} $center>Average: ; Sum: 0</StatusCell>
        <StatusCell $width={95}>
          <ZoomButton aria-label="Zoom out"><Svg width="7" height="7" viewBox="0 0 7 7"><path d="M0 3.500h7" stroke="#2e3436" strokeWidth="1.500" /></Svg></ZoomButton>
          <ZoomSlider type="range" aria-label="Zoom" min={0} max={200} defaultValue={98} />
          <ZoomButton aria-label="Zoom in"><Svg width="7" height="7" viewBox="0 0 7 7"><path d="M0 3.500h7M3.500 0v7" stroke="#2e3436" strokeWidth="1.500" /></Svg></ZoomButton>
        </StatusCell>
        <StatusCell $width={33}>100%</StatusCell>
      </StatusBar>
    </Frame>
  );
}
